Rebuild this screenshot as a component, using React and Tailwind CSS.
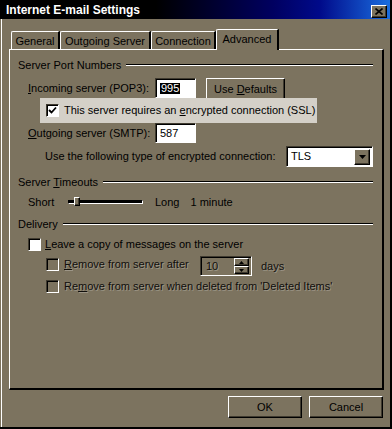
import React from "react";

const BG = "bg-[#7c735f]";

const raised =
  "border border-t-white border-l-white border-r-black border-b-black shadow-[inset_-1px_-1px_0_#3f3a2f]";
const sunken =
  "border border-t-[#3f3a2f] border-l-[#3f3a2f] border-r-white border-b-white shadow-[inset_1px_1px_0_#000]";

const disabledText = "text-[#100e0b] [text-shadow:1px_1px_0_rgba(255,255,255,0.25)]";

const Check = ({ checked = false, disabled = false }) => (
  <div
    className={`w-[13px] h-[13px] shrink-0 flex items-center justify-center ${sunken} ${
      disabled ? BG : "bg-white"
    }`}
  >
    {checked && (
      <svg width="9" height="9" viewBox="0 0 9 9">
        <polyline points="1,4 3.5,6.5 8,1.5" fill="none" stroke="#000" strokeWidth="1.8" />
      </svg>
    )}
  </div>
);

const GroupHeader = ({ children, className = "" }) => (
  <div className={`flex items-center h-[14px] pl-[8px] pr-[9px] ${className}`}>
    <span>{children}</span>
    <div className="flex-1 ml-[5px] border-t border-b border-t-black border-b-white" />
  </div>
);

const Field = ({ value, selected }) => (
  <div className={`w-[41px] h-[20px] bg-white flex items-center pl-[4px] ${sunken}`}>
    <span className={selected ? "bg-black text-white px-px" : ""}>{value}</span>
  </div>
);

const tabs = ["General", "Outgoing Server", "Connection"];
const tabWidths = ["w-[49px]", "w-[91px]", "w-[65px]"];

export default function App() {
  return (
    <div
      className={`w-[392px] h-[429px] ${BG} flex flex-col border-r-2 border-b-2 border-black text-[11px] text-black leading-none font-['Liberation_Sans',Arial,sans-serif] overflow-hidden`}
    >
      {/* title bar */}
      <div className="h-[19px] shrink-0 flex items-center justify-between pl-[6px] pr-[3px] bg-[linear-gradient(to_right,#000_0%,#000_40%,#000060_70%,#000a8a_82%,#1a6ee0_100%)]">
        <span className="text-white font-bold text-[12px]">Internet E-mail Settings</span>
        <div className={`w-[16px] h-[13px] mt-[3px] ${BG} ${raised} flex items-center justify-center`}>
          <svg width="8" height="7" viewBox="0 0 8 7">
            <path d="M0.5 0.5 L7.5 6.5 M7.5 0.5 L0.5 6.5" stroke="#000" strokeWidth="1.6" />
          </svg>
        </div>
      </div>

      <div className="flex-1 flex flex-col ml-px border-l border-white">
        {/* tabs */}
        <div className="flex items-start h-[20px] mt-[10px] ml-[9px]">
          {tabs.map((t, i) => (
            <div
              key={t}
              className={`${tabWidths[i]} h-[18px] mt-[2px] flex items-center justify-center pt-px border-t border-l border-r-2 border-t-white border-l-white border-r-black rounded-tl-[2px]`}
            >
              {t}
            </div>
          ))}
          <div className={`relative z-10 w-[63px] h-[21px] ${BG} flex items-center justify-center pb-[2px] border-t border-l border-r-2 border-t-white border-l-white border-r-black rounded-tl-[2px]`}>
            Advanced
          </div>
        </div>

        {/* panel */}
        <div className="ml-[7px] w-[375px] h-[341px] border-t border-l border-r-2 border-b-2 border-t-white border-l-white border-r-black border-b-black flex flex-col">
          <GroupHeader className="mt-[8px]">Server Port Numbers</GroupHeader>

          <div className="flex items-start h-[20px] mt-[6px] pl-[18px]">
            <span className="w-[127px] h-[20px] flex items-center pt-px">
              <span><u>I</u>ncoming server (POP3):</span>
            </span>
            <Field value="995" selected />
            <div className={`ml-[10px] w-[79px] h-[22px] flex items-center justify-center ${raised}`}>
              <span>Use <u>D</u>efaults</span>
            </div>
          </div>

          <div className="ml-[30px] w-[277px] h-[25px] bg-[#d4d0c8] flex items-center pl-[6px]">
            <Check checked />
            <span className="ml-[5px]">This server requires an <u>e</u>ncrypted connection (SSL)</span>
          </div>

          <div className="flex items-start h-[20px] pl-[18px]">
            <span className="w-[127px] h-[20px] flex items-center pt-px">
              <span><u>O</u>utgoing server (SMTP):</span>
            </span>
            <Field value="587" />
          </div>

          <div className="flex items-center h-[21px] mt-[3px] pl-[35px]">
            <span className="w-[241px]">Use the following type of encrypted connection:</span>
            <div className={`w-[87px] h-[21px] bg-white flex items-center justify-between pl-[4px] pr-[2px] ${sunken}`}>
              <span>TLS</span>
              <div className={`w-[16px] h-[16px] ${BG} ${raised} flex items-center justify-center`}>
                <svg width="7" height="4" viewBox="0 0 7 4">
                  <path d="M0 0 H7 L3.5 4 Z" fill="#000" />
                </svg>
              </div>
            </div>
          </div>

          <GroupHeader className="mt-[8px]">
            Server <u>T</u>imeouts
          </GroupHeader>

          <div className="flex items-center h-[20px] mt-[3px] pl-[18px]">
            <span className="w-[40px]">Short</span>
            <div className="relative w-[75px] h-[4px] border border-t-black border-l-black border-r-white border-b-white bg-black">
              <div className={`absolute left-[5px] top-[-4px] w-[6px] h-[9px] ${BG} ${raised}`} />
            </div>
            <span className="ml-[12px]">Long</span>
            <span className="ml-[11px]">1 minute</span>
          </div>

          <GroupHeader className="mt-[5px]">Delivery</GroupHeader>

          <div className="flex items-center h-[14px] mt-[6px] pl-[18px]">
            <Check />
            <span className="ml-[4px]">
              <u>L</u>eave a copy of messages on the server
            </span>
          </div>

          <div className="flex items-start h-[20px] mt-[5px] pl-[36px]">
            <div className="flex items-center h-[14px] mt-px w-[154px]">
              <Check disabled />
              <span className={`ml-[5px] ${disabledText}`}>
                <u>R</u>emove from server after
              </span>
            </div>
            <div className={`w-[52px] h-[20px] flex items-center justify-between pl-[5px] pr-[2px] ${sunken}`}>
              <span className={disabledText}>10</span>
              <div className="flex flex-col">
                <div className={`w-[15px] h-[8px] ${BG} ${raised} flex items-center justify-center`}>
                  <svg width="5" height="3" viewBox="0 0 5 3"><path d="M0 3 H5 L2.5 0 Z" fill="#000" /></svg>
                </div>
                <div className={`w-[15px] h-[8px] ${BG} ${raised} flex items-center justify-center`}>
                  <svg width="5" height="3" viewBox="0 0 5 3"><path d="M0 0 H5 L2.5 3 Z" fill="#000" /></svg>
                </div>
              </div>
            </div>
            <span className={`ml-[9px] mt-[3px] h-[14px] flex items-center ${disabledText}`}>days</span>
          </div>

          <div className="flex items-center h-[13px] mt-[4px] pl-[36px]">
            <Check disabled />
            <span className={`ml-[5px] ${disabledText}`}>
              Re<u>m</u>ove from server when deleted from 'Deleted Items'
            </span>
          </div>
        </div>

        {/* buttons */}
        <div className="flex justify-end gap-[7px] mt-[6px] pr-[7px]">
          <div className={`w-[74px] h-[22px] flex items-center justify-center ${raised}`}>OK</div>
          <div className={`w-[74px] h-[22px] flex items-center justify-center ${raised}`}>Cancel</div>
        </div>
      </div>
    </div>
  );
}
